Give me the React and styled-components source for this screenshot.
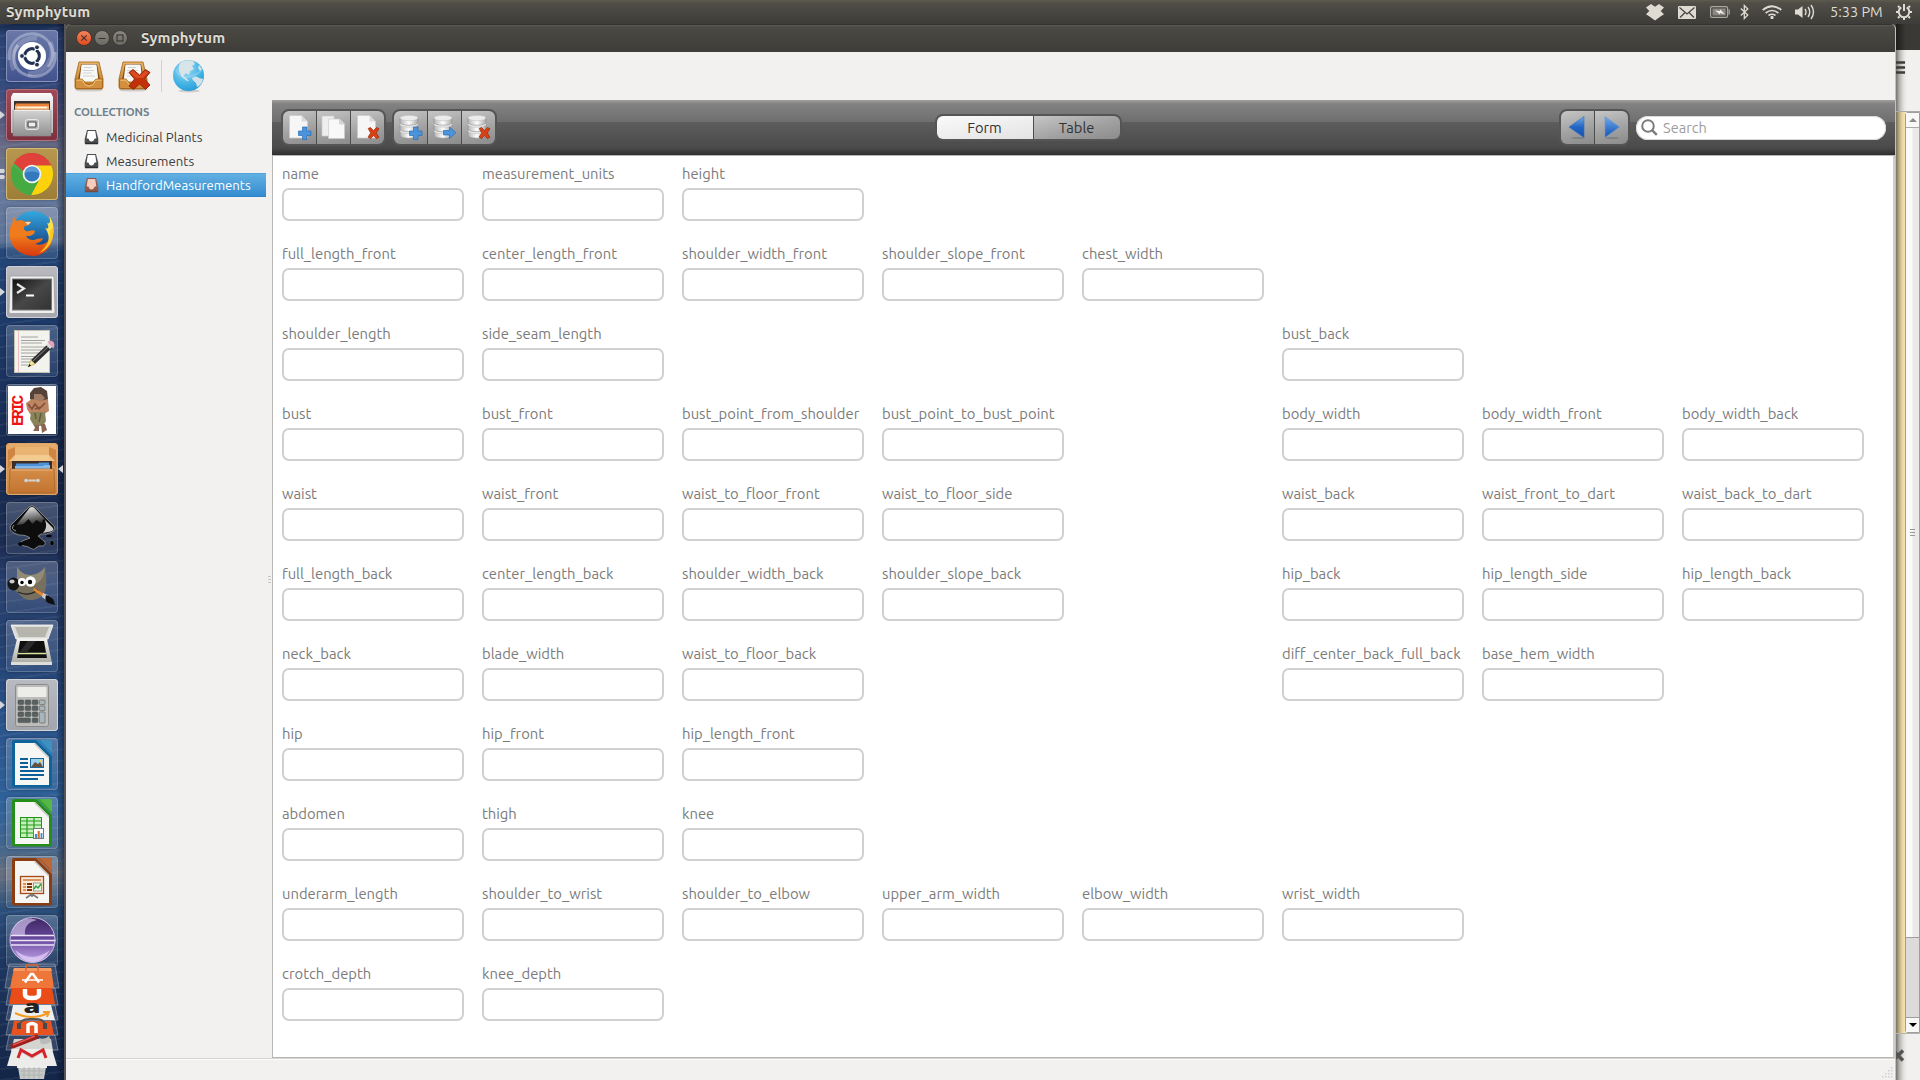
import React from "react";
import styled, { createGlobalStyle } from "styled-components";

const GlobalStyle = createGlobalStyle`
  * { box-sizing: border-box; }
  html, body { margin: 0; padding: 0; overflow: hidden; }
  body { font-family: "Ubuntu", "Noto Sans", "Open Sans", sans-serif; color: #3c3c3c; }
  svg { display: block; flex: none; }
`;

/* ---------- shell ---------- */
const Screen = styled.div`
  width: 1920px;
  height: 1080px;
  display: flex;
  flex-direction: column;
  overflow: hidden;
  background: #f1f0ee;
`;
const TopBar = styled.header`
  height: 24px;
  flex: none;
  display: flex;
  align-items: center;
  padding: 0 7px 0 6px;
  background: linear-gradient(#5d5a4f 0, #504e47 3px, #3d3c38 100%);
  color: #dfdbd2;
`;
const AppName = styled.span`
  font-size: 15px;
  font-weight: 700;
  letter-spacing: 0.17px;
  line-height: 20px;
  color: #dfdbd2;
  text-shadow: 0 -1px 0 rgba(0, 0, 0, 0.4);
`;
const Indicators = styled.div`
  margin-left: auto;
  display: flex;
  align-items: center;
`;
const Indicator = styled.span`
  display: flex;
  margin-right: ${(p) => p.$gap}px;
`;
const Clock = styled.span`
  width: 53px;
  margin-right: 12px;
  font-size: 14.5px;
  line-height: 20px;
  white-space: nowrap;
`;
const Desktop = styled.div`
  flex: 1;
  min-height: 0;
  display: flex;
  background: #3d3c38;
`;

/* ---------- launcher ---------- */
const Launcher = styled.nav`
  width: 66px;
  flex: none;
  display: flex;
  flex-direction: column;
  gap: 7px;
  padding: 6px 0 0 0;
  border-right: 2px solid #55565a;
  background:
    linear-gradient(90deg, transparent 56px, rgba(5, 12, 30, 0.5) 100%),
    repeating-linear-gradient(172deg, rgba(255,255,255,0.05) 0 2px, transparent 2px 11px),
    linear-gradient(#15264a 0, #2b4373 10px, #34497c 60px, #54567d 90px, #6c6f86 130px, #66799c 170px,
      #5d7398 218px, #254879 226px, #1d3a69 300px, #182a50 420px, #1b2c51 520px, #2a416f 560px,
      #24406f 620px, #2b548b 700px, #2f6299 780px, #41658d 820px, #687080 850px, #2b4f7b 885px,
      #1d365f 940px, #142648 1056px);
`;
const Slot = styled.div`
  height: 52px;
  flex: none;
  display: flex;
  align-items: center;
  margin-bottom: ${(p) => (p.$last ? "-11px" : "0")};
`;
const Gutter = styled.div`
  width: 6px;
  display: flex;
  flex-direction: column;
  gap: 2px;
`;
const Tile = styled.div`
  width: 52px;
  height: 52px;
  border-radius: 4px;
  overflow: hidden;
  background: ${(p) => p.$bg || "linear-gradient(rgba(255,255,255,.2), rgba(255,255,255,.06))"};
  box-shadow: inset 0 0 0 1px ${(p) => p.$edge || "rgba(255,255,255,.2)"}, 0 0 3px rgba(0,0,0,.35);
`;

/* ---------- window ---------- */
const Window = styled.section`
  width: 1830px;
  flex: none;
  display: flex;
  flex-direction: column;
  background: #f2f1ef;
  border-right: 1px solid #c3c1bd;
  border-radius: 5px 5px 0 0;
  overflow: hidden;
`;
const TitleBar = styled.div`
  height: 28px;
  flex: none;
  display: flex;
  align-items: center;
  gap: 2px;
  padding: 0 0 1px 10px;
  background: linear-gradient(#5c5b55 0, #4a4943 2px, #3e3d39 100%);
  border-top: 1px solid #33322e;
`;
const TitleText = styled.div`
  padding-left: 11px;
  display: flex;
`;
const AppToolbar = styled.div`
  height: 48px;
  flex: none;
  display: flex;
  align-items: center;
  padding-left: 8px;
`;
const ToolbarItem = styled.div`
  margin-right: ${(p) => p.$gap}px;
`;
const ToolbarRule = styled.div`
  width: 1px;
  height: 32px;
  margin-right: 10px;
  background: #d3d1cd;
`;
const Workspace = styled.div`
  flex: 1;
  min-height: 0;
  display: flex;
`;
const Sidebar = styled.aside`
  width: 200px;
  flex: none;
`;
const SidebarHeading = styled.h2`
  margin: 0;
  height: 25px;
  padding: 0 0 0 8px;
  font-size: 11.3px;
  font-weight: 700;
  line-height: 23px;
  letter-spacing: -0.1px;
  color: #6f818d;
`;
const CollectionRow = styled.div`
  height: 24px;
  display: flex;
  align-items: center;
  gap: 7px;
  padding-left: 18px;
  font-size: 13.2px;
  white-space: nowrap;
  color: ${(p) => (p.$active ? "#fff" : "#3b3b3b")};
  background: ${(p) => (p.$active ? "linear-gradient(#4199d5 0, #62b0e3 1px, #348ccf 23px, #2a7fc2 24px)" : "none")};
`;
const Splitter = styled.div`
  width: 6px;
  flex: none;
  display: flex;
  flex-direction: column;
  justify-content: center;
  align-items: center;
  gap: 2px;
`;
const Dot = styled.i`
  width: 3px;
  height: 1px;
  background: #c9c7c3;
`;
const Content = styled.main`
  flex: 1;
  display: flex;
  flex-direction: column;
`;
const RecordBar = styled.div`
  height: 55px;
  flex: none;
  display: flex;
  justify-content: space-between;
  align-items: center;
  padding: 0 9px 0 9px;
  background: linear-gradient(#a2a2a2 0, #8f8f8f 2px, #828282 4px, #6e6e6e 22px, #5d5d5d 22px, #4a4a4a 48px, #2e2e2e 55px);
`;
const BarLeft = styled.div`
  display: flex;
  gap: 6px;
`;
const BarRight = styled.div`
  display: flex;
  align-items: center;
  gap: 6px;
`;
const ButtonGroup = styled.div`
  display: flex;
  gap: 1px;
  border: 2px solid #555;
  border-radius: 8px;
  overflow: hidden;
  background: #4c4c4c;
`;
const BarButton = styled.button`
  width: ${(p) => p.$w || 33}px;
  height: ${(p) => p.$h || 33}px;
  border: 0;
  padding: 0;
  display: flex;
  align-items: center;
  justify-content: center;
  font: 14.7px "Ubuntu", "Noto Sans", sans-serif;
  color: #333;
  background: ${(p) =>
    p.$on ? "linear-gradient(170deg, #fbfbfb, #e2e2e2)" : "linear-gradient(165deg, #c6c6c6, #a2a2a2 55%, #8b8b8b)"};
`;
const SearchBox = styled.label`
  width: 250px;
  height: 24px;
  display: flex;
  align-items: center;
  gap: 5px;
  padding-left: 5px;
  border-radius: 12px;
  background: #fff;
  box-shadow: inset 0 0 0 1px #d9d9d9;
  font-size: 14.6px;
  color: #9d9d9d;
`;
const FormPane = styled.div`
  flex: 1;
  min-height: 0;
  padding: 7px 0 0 9px;
  border: 1px solid #b9b7b3;
  border-right-width: 2px;
  border-right-color: #cfcdca;
  background: #fff;
  display: grid;
  grid-template-columns: repeat(8, 200px);
  grid-auto-rows: 80px;
  align-content: start;
`;
const Field = styled.label`
  grid-column: ${(p) => p.$col};
  grid-row: ${(p) => p.$row};
  display: flex;
  flex-direction: column;
`;
const FieldLabel = styled.span`
  height: 25px;
  line-height: 21px;
  font-size: 14.8px;
  white-space: nowrap;
  color: #7b7b7b;
`;
const FieldBox = styled.span`
  width: 182px;
  height: 33px;
  border: 2px solid #d0d0d0;
  border-radius: 7px;
  background: #fff;
`;
const StatusBar = styled.footer`
  height: 22px;
  flex: none;
  display: flex;
  justify-content: flex-end;
  align-items: flex-end;
  padding: 0 2px 2px 0;
  border-top: 1px solid #d6d4d0;
  box-shadow: inset 0 1px 0 #fbfbfa;
`;

/* ---------- window behind ---------- */
const BackWindow = styled.aside`
  width: 24px;
  flex: none;
  display: flex;
  flex-direction: column;
  background: linear-gradient(90deg, #77756f 0, #bdbbb6 4px, #e6e4e1 8px, #f1f0ee 11px);
`;
const BackTitle = styled.div`
  height: 26px;
  flex: none;
  background: linear-gradient(90deg, #1f1e1c, #3a3935 10px);
`;
const BackTools = styled.div`
  height: 61px;
  flex: none;
  padding: 11px 0 0 0;
`;
const BackBody = styled.div`
  height: 923px;
  flex: none;
  display: flex;
  border-top: 1px solid #aaa9a6;
  border-bottom: 1px solid #b5b4b1;
`;
const Paper = styled.div`
  width: 9px;
  background: linear-gradient(90deg, #79735c 0, #b5a981 3px, #e5d3a1 6px, #f5e3b2 9px);
`;
const ScrollBar = styled.div`
  width: 15px;
  display: flex;
  flex-direction: column;
  border: 1px solid #9f9e9b;
  border-top-left-radius: 3px;
  border-bottom-left-radius: 3px;
  background: #dcdbd9;
`;
const ScrollButton = styled.div`
  height: 14px;
  display: flex;
  align-items: center;
  justify-content: center;
  background: #f8f8f7;
`;
const Thumb = styled.div`
  height: 811px;
  display: flex;
  align-items: center;
  justify-content: center;
  border-top: 1px solid #aaa;
  border-bottom: 1px solid #9f9e9b;
  background: linear-gradient(90deg, #fafaf9 0 6px, #ebeae9 7px);
`;
const Trough = styled.div`
  flex: 1;
  border-bottom: 1px solid #9f9e9b;
`;
const BackFooter = styled.div`
  flex: 1;
  padding: 15px 0 0 0;
`;

/* ---------- launcher icons ---------- */
const Svg52 = ({ children }) => (
  <svg width="52" height="52" viewBox="0 0 52 52">{children}</svg>
);
const Grad = ({ id, from, to, mid, x2 = 0, y2 = 1 }) => (
  <linearGradient id={id} x1="0" y1="0" x2={x2} y2={y2}>
    <stop offset="0" stopColor={from} />
    {mid && <stop offset=".5" stopColor={mid} />}
    <stop offset="1" stopColor={to} />
  </linearGradient>
);

const DashIcon = () => (
  <Svg52>
    <g fill="none" stroke="#fff">
      <path d="M3 30C1 9 24-4 40 9c9 8 8 21 2 28" strokeOpacity=".3" strokeWidth="3" />
      <path d="M49 22c3 18-16 31-33 21C6 37 6 22 12 15" strokeOpacity=".35" strokeWidth="3" />
      <path d="M8 40C1 24 13 7 31 8M44 12c7 16-4 32-22 32" strokeOpacity=".2" strokeWidth="5" />
    </g>
    <circle cx="26" cy="26" r="14" fill="#fff" />
    <circle cx="26" cy="26" r="7.3" fill="none" stroke="#233152" strokeWidth="3.2" />
    <g stroke="#fff" strokeWidth="1.4">
      <path d="M26 26L14 26M26 26l6-11M26 26l6 11" />
    </g>
    <circle cx="26" cy="26" r="5.4" fill="#fff" />
    <g fill="#233152" stroke="#fff" strokeWidth=".9">
      <circle cx="16" cy="26" r="2.4" /><circle cx="31" cy="17.3" r="2.4" /><circle cx="31" cy="34.7" r="2.4" />
    </g>
  </Svg52>
);
const FilesIcon = () => (
  <Svg52>
    <defs><Grad id="fl" from="#d4d4d4" to="#909090" /><Grad id="flt" from="#fafafa" to="#b5b5b5" /></defs>
    <path d="M7 4h38l2 4v36H5V8z" fill="url(#flt)" />
    <rect x="8" y="12" width="36" height="10" fill="#3a3230" />
    <path d="M10 14.500h33v8H9v-6z" fill="#e98238" /><path d="M9 17h34v5H9z" fill="#f8b070" /><path d="M11 18.500h30" stroke="#fff3e2" strokeWidth="1.400" />
    <rect x="7" y="21" width="38" height="26" rx="1" fill="url(#fl)" stroke="#8b8b8b" strokeWidth=".6" />
    <path d="M8 21.500h36" stroke="#eee" />
    <rect x="19.500" y="30.500" width="13" height="10" rx="2" fill="#b7b7b7" stroke="#e8e8e8" />
    <rect x="22" y="33" width="8" height="5" rx=".8" fill="#eee" stroke="#4a4a4a" strokeWidth="1.200" />
  </Svg52>
);
const ChromeIcon = () => (
  <Svg52>
    <circle cx="26" cy="26" r="21" fill="#4cae48" />
    <path d="M26 26L8 15A21 21 0 0 1 45.200 17.500H26z" fill="#de3830" />
    <path d="M8 15A21 21 0 0 1 45.200 17.500H26a9 9 0 0 0-8.500 6z" fill="#e0413a" />
    <path d="M45.200 17.500A21 21 0 0 1 25 47l8.500-16A9 9 0 0 0 29 17.500z" fill="#fdd20d" />
    <path d="M7 17.500A21 21 0 0 0 25 47l8-15a9 9 0 0 1-15 -2z" fill="#46aa43" />
    <circle cx="26" cy="26" r="9.300" fill="#f4f4f2" /><circle cx="26" cy="26" r="7.600" fill="#3478be" />
    <path d="M18.500 25a7.600 7.600 0 0 1 15 0q-7-3-15 0" fill="#5b9ad5" />
  </Svg52>
);
const FirefoxIcon = () => (
  <Svg52>
    <defs><Grad id="ffb" from="#35a8df" to="#12357a" /><Grad id="ffo" from="#ee7b22" to="#d7380f" mid="#f07c1c" /></defs>
    <circle cx="27" cy="24.500" r="20.500" fill="url(#ffb)" />
    <path d="M43 9c7 8 6 26-3 32 5-10 2-16-1-20 4 2 4-2 2-5 3 2 4-3 2-7z" fill="#fbe04a" />
    <path d="M8 8c0 3 1 5 3 6 3-2 6-1 8 1 2-1 5-1 6 0-1 2-3 4-6 4-2 2-1 4 1 5 3 1 6-2 9 0-1 5-6 5-9 5 2 4 7 5 11 3 3-1 5 0 6-1 0 3-5 5-8 6 9 3 16-3 17-13 3 14-7 25-19 25C10 48 2 36 4 23c0-4 1-6 3-8-1-3 0-5 1-7z" fill="url(#ffo)" />
    <path d="M47 20c2 12-4 23-14 26 8-6 11-13 11-22z" fill="#fdc627" />
    <path d="M19 15l6 0-3 3z" fill="#f5d7c0" />
  </Svg52>
);
const TerminalIcon = () => (
  <Svg52>
    <defs><Grad id="tm" from="#111" to="#333" mid="#474747" x2={1} /></defs>
    <path d="M4 10h44l1 36q0 1.500-1.500 1.500h-43Q3 47.500 3 46z" fill="#eee" stroke="#9d9da0" strokeWidth=".8" />
    <rect x="6.500" y="13" width="39" height="31" fill="url(#tm)" stroke="#777" />
    <path d="M11 18l7 4.500-7 4.500" fill="none" stroke="#e8e8e8" strokeWidth="2.200" /><path d="M20 29.500h8" stroke="#fff" strokeWidth="2" />
  </Svg52>
);
const EditorIcon = () => (
  <Svg52>
    <rect x="8.500" y="5.500" width="35" height="42" fill="#f3f3ee" stroke="#c1c1b4" />
    <path d="M12.500 6v41" stroke="#f1aeb0" strokeWidth=".8" />
    <path d="M15 12h17M15 15.500h24M15 18h21M15 22h24M15 25h20M15 28h23M15 31.500h14M15 34h17M15 37h12M15 40h7" stroke="#9a9a9a" strokeWidth=".9" />
    <path d="M25 35l18-17 4 4-18 17z" fill="#2d2d2d" /><path d="M27 36l17-16" stroke="#8a8a8a" />
    <path d="M25 35l-3 7 7-3z" fill="#f3e29b" stroke="#a48f35" strokeWidth=".5" /><path d="M22 42l1.500-3 1.500 1.700z" />
    <path d="M40 20l3-3 4 4-3 3z" fill="#ddd" /><path d="M43 17q3-1 4 1 1 2 0 4z" stroke="#e2a0bb" strokeWidth="2" fill="#f1bfd1" />
  </Svg52>
);
const EricIcon = () => (
  <Svg52>
    <rect x="2" y="2" width="48" height="48" fill="#fff" />
    <text transform="translate(17 42) rotate(-90)" fill="#f01414" fontFamily="Liberation Mono, monospace" fontWeight="700" fontSize="16" textLength="31" lengthAdjust="spacing">ERIC</text>
    <path d="M24 9l4-5 7-1 6 4 1 8-4 4h-9l-5-4z" fill="#54433a" /><path d="M28 10l7 0 4 4-5 5-6-3z" fill="#a17c66" />
    <path d="M20 19l6-4 8 2 8-2 1 12-5 3H24l-3-5z" fill="#bd8562" /><path d="M22 20l4 5 3-5 4 5 6-6M29 25l6-2" stroke="#805039" strokeWidth="1.600" fill="none" />
    <path d="M25 28h14l1 9-3 5H28l-4-7z" fill="#8a845b" /><path d="M29 29l1 6M35 29l-2 9" stroke="#605e3f" strokeWidth="1.500" />
    <path d="M28 41h5v6h-6l2-3zM35 40h4l2 6-5 3z" fill="#8b6655" />
  </Svg52>
);
const DrawerIcon = () => (
  <Svg52>
    <defs><Grad id="dr" from="#d48d48" to="#c27430" /><Grad id="drt" from="#e6ac6c" to="#c98442" /></defs>
    <rect x="1" y="1" width="50" height="50" rx="3" fill="url(#drt)" />
    <path d="M9 4h34l7 13H2z" fill="#eab573" /><path d="M2 7l7-3v12l-7 10zM50 7l-7-3v12l7 10z" fill="#cf8642" />
    <path d="M3 18l6-6h34l6 6z" fill="#f6d196" fillOpacity=".8" />
    <rect x="6" y="18" width="40" height="9" fill="#3c2e26" /><path d="M10 20.500h22l1-1h10v8H9z" fill="#4e90d5" /><path d="M9 23h28l1-1h6v5H9z" fill="#87b9e8" />
    <path d="M4 26h44l1 23q0 1-1 1H4q-1 0-1-1z" fill="url(#dr)" stroke="#a5662d" strokeWidth=".8" /><path d="M5 27h42" stroke="#f3b678" />
    <path d="M19 37.500h14" stroke="#d8d2ca" strokeWidth="2" /><g fill="#d8d4ce" stroke="#9a8060" strokeWidth=".4"><circle cx="20" cy="37.500" r="2" /><circle cx="32" cy="37.500" r="2" /></g>
  </Svg52>
);
const InkscapeIcon = () => (
  <Svg52>
    <defs><Grad id="ik" from="#fff" to="#333" mid="#9a9a9a" x2={0.3} /></defs>
    <path d="M23 5q3-2.500 6 0l18 18q4 4-1 7-6 3-11 2l-3 2 6 5q3 3-1 5-5-1-7 2-2 3-6 0-2-2-6-2-5-2-2-5l8-3q-3-3-11-3-9-3-9-7 0-3 3-5z" fill="#0d0d0d" stroke="#aaa" strokeWidth=".7" />
    <path d="M23.500 6q2.500-2 5 0l12 13-3-2-2 4-5-3-4 4-4-5-5 5-7 1z" fill="url(#ik)" />
    <path d="M39 18l8 8q2 3-5 4l-5 1q5-5 2-13z" fill="#c8c8c8" /><path d="M8 23q-4 4 2 6" stroke="#999" fill="none" />
    <ellipse cx="14.500" cy="42" rx="2.400" ry="1.700" /><ellipse cx="46" cy="41" rx="2" ry="2.500" stroke="#777" strokeWidth=".4" /><ellipse cx="43" cy="34" rx="3" ry="1.300" />
  </Svg52>
);
const GimpIcon = () => (
  <Svg52>
    <path d="M11 6q6 9 14 8 10-1 14-8 2 12 1 19-1 11-9 13-9 3-15-2-3-3-7-7-4-7 2-12z" fill="#77705f" />
    <path d="M11 6q6 9 14 8 9-1 14-8-1 13-8 16-10 4-20-1z" fill="#918a77" />
    <ellipse cx="7.500" cy="23" rx="6" ry="6.500" fill="#161616" /><ellipse cx="6" cy="20.500" rx="2.600" ry="2" fill="#ccc" />
    <circle cx="16" cy="21" r="4" fill="#fff" /><circle cx="24.500" cy="20.500" r="5.200" fill="#fff" />
    <circle cx="16" cy="21.500" r="1.700" /><circle cx="24" cy="21" r="2.200" />
    <path d="M12 31q10 5 20-2" stroke="#222" strokeWidth="1.200" fill="none" />
    <path d="M28 27l10 6-1 3-10-7z" fill="#e8862b" /><path d="M37 32l5 2-2 5-4-3z" fill="#ccc" /><path d="M40 34q8 2 9 10-4-1-7-2-4-3-2-8z" fill="#111" />
  </Svg52>
);
const ScannerIcon = () => (
  <Svg52>
    <defs><Grad id="sc" from="#f2f2ee" to="#a5a59f" /></defs>
    <path d="M5 5h42l-5 14H10z" fill="#ddddd8" stroke="#fff" strokeWidth=".8" /><path d="M9 7h34l-4 10H13z" fill="#b5b5ae" />
    <path d="M11 19h30l5 24v2H5v-2z" fill="url(#sc)" /><path d="M5 42h41v3H5z" fill="#deded8" />
    <path d="M14 21h24l3 17H11z" fill="#101010" /><path d="M12 33.500h28" stroke="#d9e59a" strokeWidth="1.300" /><path d="M22 21l8 0-10 12h-7z" fill="#2a2a2a" />
  </Svg52>
);
const CalculatorIcon = () => {
  const cells = [];
  for (let r = 0; r < 4; r++) for (let c = 0; c < 4; c++) {
    if (r === 3 && (c === 1 || c === 3)) continue;
    const wide = r === 3 && c === 0;
    const tall = r === 2 && c === 3;
    cells.push(<rect key={`${r}${c}`} x={12 + c * 7.100} y={21 + r * 6} width={wide ? 12.500 : 5.700} height={tall ? 11 : 4.600} rx="1" fill={c === 3 ? "#aab5bb" : "#596060"} stroke="#454b4b" strokeWidth=".5" />);
  }
  return (
    <Svg52>
      <rect x="9.500" y="5.500" width="33" height="42" rx="2" fill="#bcbcba" stroke="#8a8a88" />
      <rect x="11.500" y="8" width="29" height="10" rx="1" fill="#ecece8" />
      {cells}
    </Svg52>
  );
};
const OfficeIcon = ({ dark, mid, light, children }) => (
  <Svg52>
    <path d="M6 4q0-2 2-2h22l16 16v29q0 2.500-2.500 2.500h-35Q6 49.500 6 47z" fill={dark} />
    <path d="M31 2h15v15z" fill={mid} /><path d="M34 2h10q2 0 2 2v11z" fill={light} />
    <path d="M9 5h20l14 14v28H9z" fill="#f6f6f4" /><path d="M29 5l14 14v2L28 6z" fill="#c9c9c5" />
    {children}
  </Svg52>
);
const WriterIcon = () => (
  <OfficeIcon dark="#0f639b" mid="#2381ba" light="#3f8fc0">
    <path d="M14 21h8M14 25h8M14 29h8M14 33h24M14 37h24M14 41h18" stroke="#0e5f97" strokeWidth="2" />
    <rect x="24.500" y="20.500" width="13" height="9" fill="#9dd0ef" stroke="#1b659b" /><path d="M25 29l4-5 3 2 2-2 3 5z" fill="#665040" /><circle cx="35" cy="23" r="1.200" fill="#f7d34c" />
  </OfficeIcon>
);
const CalcIcon = () => (
  <OfficeIcon dark="#248e19" mid="#39a52c" light="#55b846">
    <rect x="14.500" y="20.500" width="21" height="20" fill="#c5f0bc" stroke="#23931a" />
    <path d="M14 24h22M14 28h22M14 32h22M14 36h22M21 20v21M28 20v21" stroke="#279b1d" strokeWidth="1.200" />
    <rect x="27.500" y="31.500" width="10" height="10" fill="#fff" stroke="#777" /><path d="M30 41v-4" stroke="#3a8fcf" strokeWidth="2.200" /><path d="M32.700 41v-7" stroke="#e46c25" strokeWidth="2.200" /><path d="M35.500 41v-5" stroke="#3a8fcf" strokeWidth="1.800" />
  </OfficeIcon>
);
const ImpressIcon = () => (
  <OfficeIcon dark="#8b3d12" mid="#b45a26" light="#b9683a">
    <rect x="14.500" y="20.500" width="23" height="17" fill="#fbe9d8" stroke="#a44a17" strokeWidth="1.300" />
    <path d="M17 24h18" stroke="#d0763c" strokeWidth="1.600" /><path d="M17 28h3M17 31h3M17 34h3" stroke="#e38e53" strokeWidth="2" /><path d="M21 28h5M21 31h5M21 34h5" stroke="#7d3510" strokeWidth="2" />
    <rect x="27.500" y="27" width="8" height="8" fill="#e8f3e2" stroke="#777" strokeWidth=".7" /><path d="M28 33l2-3 2 2 3-4" stroke="#29a03a" fill="none" strokeWidth="1.400" />
    <path d="M26 38l-6 4M26 38l6 4M26 38v3" stroke="#777" strokeWidth="1.600" />
  </OfficeIcon>
);
const EclipseIcon = () => (
  <Svg52>
    <defs><Grad id="ec" from="#3c2660" to="#c3a6e9" mid="#6b4ba0" y2={1} /></defs>
    <circle cx="26.500" cy="25" r="22.500" fill="url(#ec)" stroke="#cdbde6" strokeWidth="1" />
    <path d="M6 20C5 7 20 0 31 5c-9 2-13 7-12 15z" fill="#dccdf4" fillOpacity=".65" />
    <path d="M5 20.500h43M4.500 25.500h45M5 30h43" stroke="#ebe4f7" strokeWidth="1.500" />
    <path d="M9 35q17 14 35 0-6 11-17 12-12 0-18-12z" fill="#e4d5f8" fillOpacity=".7" />
  </Svg52>
);

const FoldedStack = () => (
  <svg width="64" height="118" viewBox="0 0 64 118">
    <g fill="#fff" fillOpacity=".13" stroke="#fff" strokeOpacity=".3">
      <path d="M9 1h46l4 24H5z" /><path d="M9 25h46l3 17H6zM9 42h46l3 15H6zM9 57h46l3 15H6zM9 72h46l3 15H6z" />
    </g>
    <path d="M14 5h37l3 20H10z" fill="#ee7638" /><path d="M14 5h37l1 3H13z" fill="#f49b66" />
    <path d="M26 8V4q0-2 2-2h8q2 0 2 2v4" fill="none" stroke="#d7652d" strokeWidth="1.500" />
    <path d="M25 19.500l6-8.500h2l6 8.500" fill="none" stroke="#fff" strokeWidth="2.600" /><path d="M22 17h21" stroke="#fff" strokeWidth="1.500" />
    <path d="M12 25h40l3 16H9z" fill="#e94c16" /><path d="M25 26v5.500q0 3.500 7 3.500t7-3.500V26" fill="none" stroke="#fff" strokeWidth="4.500" />
    <path d="M13 42h38l4 15H10z" fill="#efefed" />
    <text x="32" y="50" fontFamily="Open Sans, sans-serif" fontWeight="800" fontSize="17" textAnchor="middle" textLength="17" lengthAdjust="spacingAndGlyphs" fill="#222">a</text>
    <path d="M15 50q17 8 33 0m-5-1l6 0-2 5" fill="none" stroke="#f59a23" strokeWidth="2" />
    <path d="M14 58h37l3 14H11z" fill="#e65320" /><path d="M28 70v-8q4-3 8 0v8" stroke="#fff" strokeWidth="3.500" fill="none" />
    <path d="M19 63q1-8 13-7 13-1 13 7" stroke="#555" strokeWidth="2" fill="none" /><path d="M19 60v6M45 60v6" stroke="#4a4a4a" strokeWidth="4" />
    <path d="M14 76h37l2 12H11z" fill="#d4d4d0" /><path d="M39 75q6 2 10-2l2 5q-4 4-10 3z" fill="#bbb" />
    <path d="M12 86h40l5 17H7z" fill="#ececea" /><path d="M19 87l13 8 13-8" stroke="#d6d6d6" strokeWidth="2" fill="none" /><path d="M18 95l3-8 11 6 11-6 3 8" fill="none" stroke="#d4242b" strokeWidth="3" />
    <path d="M13 83L36 74" stroke="#9c1f1c" strokeWidth="5" strokeLinecap="round" /><path d="M13 82l22-9" stroke="#e25350" strokeWidth="1.500" />
    <path d="M18 104h28l-2 12H20z" fill="#c6c8c6" /><path d="M17 104h30" stroke="#eee" strokeWidth="2" /><path d="M20 108h24M21 112h22M24 104v12M29 104v12M34 104v12M39 104v12" stroke="#aab0af" strokeWidth=".8" />
  </svg>
);

const LAUNCHER = [
  { icon: DashIcon, bg: "linear-gradient(#6a79a8, #42528f)", edge: "#8893bb" },
  { icon: FilesIcon, bg: "linear-gradient(#a04a58, #7d2f3e)", edge: "#b5717b", pips: 1 },
  { icon: ChromeIcon, bg: "linear-gradient(#b8984f, #9d7d37)", edge: "#d3b976", pips: 2 },
  { icon: FirefoxIcon },
  { icon: TerminalIcon, bg: "linear-gradient(#b9b9bf, #a5a6ad)", edge: "#d0d0d5", pips: 1 },
  { icon: EditorIcon },
  { icon: EricIcon },
  { icon: DrawerIcon, bg: "#c98440", edge: "#e0a568", pips: 1, current: true },
  { icon: InkscapeIcon },
  { icon: GimpIcon },
  { icon: ScannerIcon },
  { icon: CalculatorIcon, bg: "linear-gradient(#b9bbc2, #a2a5ae)", edge: "#d3d4d8", pips: 1 },
  { icon: WriterIcon },
  { icon: CalcIcon },
  { icon: ImpressIcon },
  { icon: EclipseIcon },
];
const Pip = ({ flip, small }) => (
  <svg width="5" height={small ? 4 : 8} viewBox="0 0 5 8" preserveAspectRatio="none">
    <path d={flip ? "M5 0v8L0 4z" : small ? "M0 0h4l1 4-1 4H0z" : "M0 0l5 4-5 4z"} fill="#d4d6dc" />
  </svg>
);

/* ---------- application icons ---------- */
const Tray = ({ remove }) => (
  <svg width={remove ? 34 : 30} height="34" viewBox={remove ? "0 0 34 34" : "0 0 30 34"}>
    <defs><Grad id="tr" from="#e9b468" to="#b8741f" /></defs>
    <ellipse cx="15" cy="31" rx="14" ry="1.600" fill="#000" fillOpacity=".15" />
    <path d="M5 3h20l4 17v8q0 2-2 2H3q-2 0-2-2v-8z" fill="url(#tr)" stroke="#ac6f26" strokeWidth=".9" />
    <path d="M7 5h16l3 16H4z" fill="#7f4c18" />
    <path d="M7.500 5.500h15l2 17h-19z" fill="#f7f7f5" /><path d="M10 8.500h8M9 11.500h11M9 14h9M9 17h12" stroke="#d2d2d2" />
    <path d="M1.500 20h6q1 0 1.500 1 2 4.500 6 4.500t6-4.500q.5-1 1.500-1h6v8q0 1.500-1.500 1.500h-24q-1.500 0-1.500-1.500z" fill="#d3913f" stroke="#a1631b" strokeWidth=".8" />
    <path d="M2.500 21.200H8q3 6 7 6t7-6h5.500" stroke="#efc17c" fill="none" />
    {remove && <path d="M11 13.500l4-3 6.500 5.500 6-5.500 4.500 3-5.500 6.500 5.500 6-4.500 4.500-6-5.500-6 5.500-4.500-3.500 5.500-7z" fill="#c2310a" stroke="#912105" strokeWidth=".9" />}
    {remove && <path d="M12 13.500l3-2 6.500 5.500 6-5.500 3 2-5.500 5.500h-7z" fill="#dc4c22" />}
  </svg>
);
const Globe = () => (
  <svg width="33" height="34" viewBox="0 0 33 34">
    <defs><radialGradient id="gb" cx=".4" cy=".3" r=".8"><stop offset="0" stopColor="#a5dcf5" /><stop offset=".6" stopColor="#43b4e6" /><stop offset="1" stopColor="#2096cf" /></radialGradient></defs>
    <ellipse cx="17" cy="32" rx="11" ry="1.500" fill="#000" fillOpacity=".15" />
    <circle cx="16.500" cy="16.500" r="15.500" fill="url(#gb)" />
    <path d="M8 4q6-4 13-2l2 3-3 2 2 3-4 2-1 4-3-2-3 3 3 2 3 3-2 0-5-4-3-6q-1-3 1-8z" fill="#d9e4e8" />
    <path d="M20 19q4-3 7 0l4 1q-1 6-6 8l-1-4q-4-3-4-5z" fill="#d3e0e5" /><path d="M27 6l3 4-2 2-2-3z" fill="#d7e2e6" />
    <path d="M4 10q2 8 11 8 9-1 15-7" stroke="#fff" strokeOpacity=".2" fill="none" strokeWidth="2" />
  </svg>
);
const MiniTray = ({ active }) => (
  <svg width="15" height="16" viewBox="0 0 15 16">
    <path d="M3 1h9l2.300 9v4.500H.7V10z" fill={active ? "#8d5a4d" : "#4a4d4f"} />
    <path d="M3.800 2h7.400l1.200 7.500h-1.700q-1 3-3.200 3t-3.200-3H2.600z" fill={active ? "#f5cdbf" : "#fff"} />
    <path d="M1 14.500h13" stroke={active ? "#794a40" : "#2d2f30"} strokeWidth="1.500" />
  </svg>
);
const Badge = ({ kind }) => {
  if (kind === "add") return <path d="M19.500 16h4.500v4H28v4.500h-4v4h-4.500v-4H15.500V20h4z" fill="#4b93dd" stroke="#2a6db7" strokeWidth=".7" />;
  if (kind === "go") return <path d="M15.500 19.500h6v-3.500l6.500 5.700-6.500 5.800V24h-6z" fill="#4b93dd" stroke="#2a6db7" strokeWidth=".7" />;
  return <path d="M17.200 17.500l2.300-1 3 3 3-3 2.500 1.200-2.700 4.300 2.700 4.200-2.500 1.500-3-3.200-3 3.200-2.500-1.700 2.700-4z" fill="#d64216" stroke="#a32a08" strokeWidth=".7" />;
};
const PageIcon = ({ kind }) => (
  <svg width="33" height="33" viewBox="0 0 33 33">
    {kind === "copy" ? (
      <g stroke="#ccc" strokeWidth=".7">
        <path d="M5 5h12v20H5z" fill="#eee" /><path d="M11.500 8h11l5 5v14.500h-16z" fill="#f8f8f8" /><path d="M22.500 8v5h5z" fill="#d8d8d8" />
      </g>
    ) : (
      <>
        <path d="M6.500 4.500h12l6 6V27h-18z" fill="#f6f6f6" stroke="#ccc" strokeWidth=".7" /><path d="M18.500 4.500v6h6z" fill="#d9d9d9" />
        <Badge kind={kind} />
      </>
    )}
  </svg>
);
const DatabaseIcon = ({ kind }) => (
  <svg width="33" height="33" viewBox="0 0 33 33">
    <defs><Grad id={`db${kind}`} from="#b4b4b4" mid="#fff" to="#a8a8a8" x2={1} y2={0} /></defs>
    {[20, 13.500, 7].map((y) => (
      <g key={y}>
        <path d={`M6 ${y}v4q0 3.200 9 3.200t9-3.200v-4z`} fill={`url(#db${kind})`} stroke="#8f8f8f" strokeWidth=".6" />
        <ellipse cx="15" cy={y} rx="9" ry="2.700" fill="#ebebeb" stroke="#bbb" strokeWidth=".5" />
      </g>
    ))}
    <Badge kind={kind} />
  </svg>
);
const NavArrow = ({ flip }) => (
  <svg width="33" height="33" viewBox="0 0 33 33">
    <defs><Grad id={flip ? "nr" : "nl"} from="#76a9e6" to="#1551ae" mid={flip ? "#3f7dd0" : "#2266c4"} /></defs>
    <ellipse cx="17" cy="27" rx="7" ry="1" fill="#000" fillOpacity=".15" />
    <path d={flip ? "M10 5.500l14.500 10.500L10 26.500z" : "M23 5.500L8 16l15 10.500z"} fill={`url(#${flip ? "nr" : "nl"})`} stroke={flip ? "#6898da" : "#2f6dbc"} strokeWidth=".6" />
  </svg>
);

const WindowButton = ({ kind }) => (
  <svg width="16" height="16" viewBox="0 0 16 16">
    <defs><Grad id={`wb${kind}`} from={kind === "close" ? "#f58560" : "#8a887f"} to={kind === "close" ? "#e2481b" : "#6a6962"} /></defs>
    <circle cx="8" cy="8" r="7.500" fill={`url(#wb${kind})`} stroke="#33322e" strokeWidth=".8" />
    <g stroke="#35332e" strokeWidth="1.100" fill="none">
      {kind === "close" && <path d="M5.300 5.300l5.400 5.400M10.700 5.300l-5.400 5.400" />}
      {kind === "min" && <path d="M4.500 8.500h7" />}
      {kind === "max" && <rect x="5" y="5" width="6" height="6" />}
    </g>
  </svg>
);

/* ---------- data: one array per row, null leaves a column empty ---------- */
const ROWS = [
  ["name", "measurement_units", "height"],
  ["full_length_front", "center_length_front", "shoulder_width_front", "shoulder_slope_front", "chest_width"],
  ["shoulder_length", "side_seam_length", null, null, null, "bust_back"],
  ["bust", "bust_front", "bust_point_from_shoulder", "bust_point_to_bust_point", null, "body_width", "body_width_front", "body_width_back"],
  ["waist", "waist_front", "waist_to_floor_front", "waist_to_floor_side", null, "waist_back", "waist_front_to_dart", "waist_back_to_dart"],
  ["full_length_back", "center_length_back", "shoulder_width_back", "shoulder_slope_back", null, "hip_back", "hip_length_side", "hip_length_back"],
  ["neck_back", "blade_width", "waist_to_floor_back", null, null, "diff_center_back_full_back", "base_hem_width"],
  ["hip", "hip_front", "hip_length_front"],
  ["abdomen", "thigh", "knee"],
  ["underarm_length", "shoulder_to_wrist", "shoulder_to_elbow", "upper_arm_width", "elbow_width", "wrist_width"],
  ["crotch_depth", "knee_depth"],
];

const StatusIcons = () => (
  <>
    <Indicator $gap={14}>
      <svg width="18" height="18" viewBox="0 0 18 18" fill="#dfdbd2"><path d="M5 1l4 2.800L13 1l5 3.500L14.700 8 18 11.200l-3.500 2.200L9 17.500l-5.500-4.100L0 11.200 3.300 8 0 4.500z" /></svg>
    </Indicator>
    <Indicator $gap={14}>
      <svg width="18" height="13" viewBox="0 0 18 13"><rect width="18" height="13" rx="1" fill="#dfdbd2" /><path d="M1.500 1.500L9 8l7.500-6.500M2 11.500l5-5M16 11.500l-5-5" fill="none" stroke="#45443f" strokeWidth="1.200" /></svg>
    </Indicator>
    <Indicator $gap={10}>
      <svg width="20" height="12" viewBox="0 0 20 12"><rect x=".6" y=".6" width="17" height="10.800" rx="1.500" fill="none" stroke="#aaa79f" strokeWidth="1.200" /><rect x="2.500" y="2.500" width="13.200" height="7" fill="#89877f" /><path d="M18.500 3.500h1.300v5h-1.300z" fill="#aaa79f" /><path d="M5 4.500l5 .4 0-1.700 5 5-5-1.300v1.700z" fill="#efece5" /></svg>
    </Indicator>
    <Indicator $gap={13}>
      <svg width="9" height="16" viewBox="0 0 9 16"><path d="M.8 4.500l7 6.500-3.500 3.500v-13L7.800 5l-7 6.500" fill="none" stroke="#dfdbd2" strokeWidth="1.300" /></svg>
    </Indicator>
    <Indicator $gap={13}>
      <svg width="20" height="14" viewBox="0 0 20 14" fill="none" stroke="#dfdbd2" strokeWidth="1.700"><path d="M.7 5q9.300-7.500 18.600 0M3.600 8q6.400-5 12.800 0M6.500 10.500q3.500-2.500 7 0" /><circle cx="10" cy="12.500" r=".8" fill="#dfdbd2" /></svg>
    </Indicator>
    <Indicator $gap={15}>
      <svg width="20" height="16" viewBox="0 0 20 16" fill="none" stroke="#dfdbd2" strokeWidth="1.400"><path d="M0 5.500h3L7.500 2v12L3 10.500H0z" fill="#dfdbd2" stroke="none" /><path d="M10 5q2 3 0 6M13 3q3.500 5 0 10M16 1q5 7 0 14" /></svg>
    </Indicator>
    <Clock>5:33 PM</Clock>
    <svg width="18" height="18" viewBox="0 0 18 18" fill="none" stroke="#dfdbd2">
      <path d="M6.300 4.300a5.300 5.300 0 1 0 5.400 0" strokeWidth="2" /><path d="M9 1v7" strokeWidth="2" />
      <path d="M1 9h2M15 9h2M3 3l1.500 1.500M15 3l-1.500 1.500M3 15l1.500-1.500M15 15l-1.500-1.500M9 15v2" strokeWidth="2" />
    </svg>
  </>
);

export default function App() {
  return (
    <Screen>
      <GlobalStyle />
      <TopBar>
        <AppName>Symphytum</AppName>
        <Indicators><StatusIcons /></Indicators>
      </TopBar>
      <Desktop>
        <Launcher>
          {LAUNCHER.map(({ icon: Icon, bg, edge, pips = 0, current }, i) => (
            <Slot key={i} $last={i === LAUNCHER.length - 1}>
              <Gutter>{Array.from({ length: pips }, (_, n) => <Pip key={n} small={pips > 1} />)}</Gutter>
              <Tile $bg={bg} $edge={edge}><Icon /></Tile>
              {current && <Pip flip />}
            </Slot>
          ))}
          <FoldedStack />
        </Launcher>

        <Window>
          <TitleBar>
            <WindowButton kind="close" />
            <WindowButton kind="min" />
            <WindowButton kind="max" />
            <TitleText><AppName>Symphytum</AppName></TitleText>
          </TitleBar>
          <AppToolbar>
            <ToolbarItem $gap={14}><Tray /></ToolbarItem>
            <ToolbarItem $gap={9}><Tray remove /></ToolbarItem>
            <ToolbarRule />
            <Globe />
          </AppToolbar>
          <Workspace>
            <Sidebar>
              <SidebarHeading>COLLECTIONS</SidebarHeading>
              <CollectionRow><MiniTray />Medicinal Plants</CollectionRow>
              <CollectionRow><MiniTray />Measurements</CollectionRow>
              <CollectionRow $active><MiniTray active />HandfordMeasurements</CollectionRow>
            </Sidebar>
            <Splitter><Dot /><Dot /><Dot /></Splitter>
            <Content>
              <RecordBar>
                <BarLeft>
                  <ButtonGroup>
                    <BarButton><PageIcon kind="add" /></BarButton>
                    <BarButton><PageIcon kind="copy" /></BarButton>
                    <BarButton><PageIcon kind="remove" /></BarButton>
                  </ButtonGroup>
                  <ButtonGroup>
                    <BarButton><DatabaseIcon kind="add" /></BarButton>
                    <BarButton><DatabaseIcon kind="go" /></BarButton>
                    <BarButton><DatabaseIcon kind="remove" /></BarButton>
                  </ButtonGroup>
                </BarLeft>
                <ButtonGroup>
                  <BarButton $w={96} $h={23} $on>Form</BarButton>
                  <BarButton $w={86} $h={23}>Table</BarButton>
                </ButtonGroup>
                <BarRight>
                  <ButtonGroup>
                    <BarButton><NavArrow /></BarButton>
                    <BarButton><NavArrow flip /></BarButton>
                  </ButtonGroup>
                  <SearchBox>
                    <svg width="17" height="17" viewBox="0 0 17 17" fill="none" stroke="#7c7c7c"><circle cx="7" cy="7" r="5.800" strokeWidth="2" /><path d="M11.300 11.300l4.500 4.500" strokeWidth="2.400" /></svg>
                    Search
                  </SearchBox>
                </BarRight>
              </RecordBar>
              <FormPane>
                {ROWS.flatMap((row, r) =>
                  row.map((label, c) => label && (
                    <Field key={label} $col={c + 1} $row={r + 1}>
                      <FieldLabel>{label}</FieldLabel>
                      <FieldBox />
                    </Field>
                  ))
                )}
              </FormPane>
            </Content>
          </Workspace>
          <StatusBar>
            <svg width="11" height="11" viewBox="0 0 11 11" fill="#d2d0cc">
              {[0, 1, 2, 3].flatMap((r) => Array.from({ length: r + 1 }, (_, c) => <rect key={`${r}${c}`} x={9 - c * 3} y={r * 3} width="1.500" height="1.500" />))}
            </svg>
          </StatusBar>
        </Window>

        <BackWindow>
          <BackTitle />
          <BackTools>
            <svg width="9" height="13" viewBox="0 0 9 13" stroke="#3c3c3c" strokeWidth="2.600"><path d="M0 1.500h9M0 6.500h9M0 11.500h9" /></svg>
          </BackTools>
          <BackBody>
            <Paper />
            <ScrollBar>
              <ScrollButton><svg width="8" height="4" viewBox="0 0 8 4"><path d="M4 0l4 4H0z" fill="#8b8b8b" /></svg></ScrollButton>
              <Thumb><svg width="5" height="7" viewBox="0 0 5 7" stroke="#999"><path d="M0 .5h5M0 3.500h5M0 6.500h5" /></svg></Thumb>
              <Trough />
              <ScrollButton><svg width="8" height="4" viewBox="0 0 8 4"><path d="M0 0h8L4 4z" /></svg></ScrollButton>
            </ScrollBar>
          </BackBody>
          <BackFooter>
            <svg width="9" height="13" viewBox="0 0 9 13" stroke="#555" strokeWidth="3.600"><path d="M-3 1.500L7 11.500M7 1.500L-3 11.500" /></svg>
          </BackFooter>
        </BackWindow>
      </Desktop>
    </Screen>
  );
}
